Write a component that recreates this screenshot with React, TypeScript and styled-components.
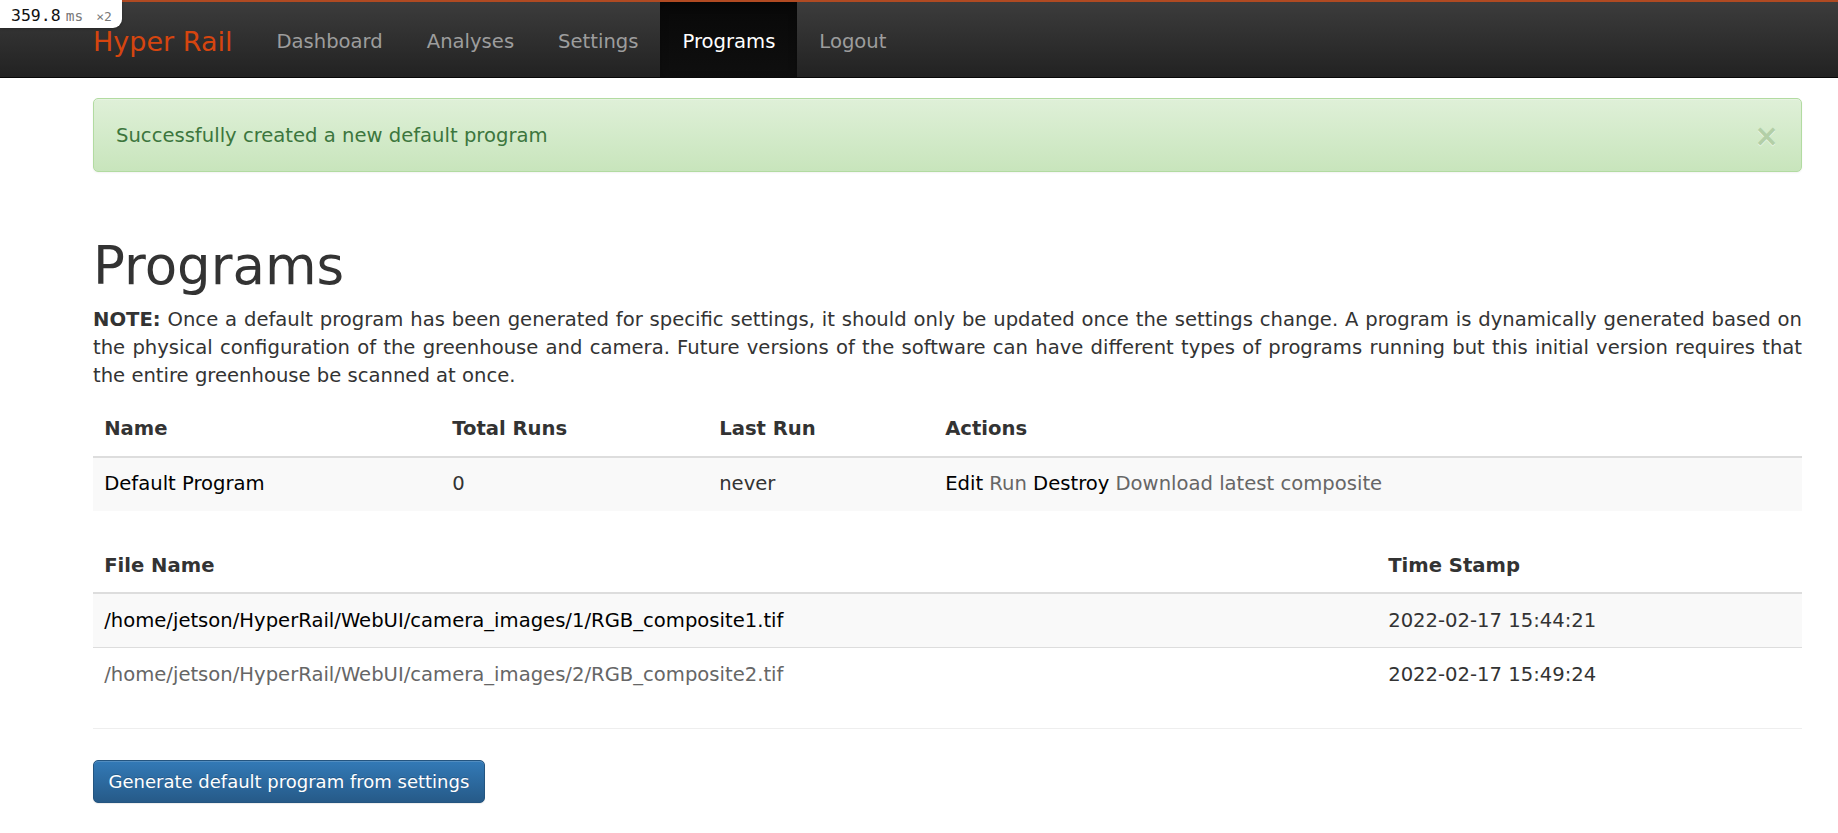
import React from "react";
import styled, { createGlobalStyle } from "styled-components";

const GlobalStyle = createGlobalStyle`
  html, body { margin: 0; padding: 0; background: #fff; }
  body {
    font-family: "DejaVu Sans", Verdana, sans-serif;
    font-size: 19.6px;
    line-height: 28px;
    color: #333;
  }
  * { box-sizing: border-box; }
`;

const Page = styled.div`
  position: relative;
  min-height: 833px;
`;

const ProfilerBadge = styled.div`
  position: absolute;
  top: 0;
  left: 0;
  z-index: 10;
  width: 122px;
  height: 28px;
  padding-left: 11px;
  background: #fff;
  border-bottom-right-radius: 9px;
  box-shadow: 0 1px 3px rgba(0, 0, 0, 0.25);
  font-family: "DejaVu Sans Mono", "Liberation Mono", monospace;
  line-height: 29px;
  white-space: nowrap;
`;

const BadgeValue = styled.span`
  font-size: 16.5px;
  color: #111;
`;

const BadgeUnit = styled.span<{ $size: number; $gap: number }>`
  font-size: ${(p) => p.$size}px;
  color: #777;
  margin-left: ${(p) => p.$gap}px;
`;

const Navbar = styled.nav`
  display: flex;
  align-items: stretch;
  height: 78px;
  padding-left: 93px;
  border-top: 2px solid #b04a22;
  border-bottom: 1px solid #080808;
  background-image: linear-gradient(to bottom, #3c3c3c 0%, #222 100%);
`;

const Brand = styled.a`
  display: flex;
  align-items: center;
  padding-top: 5px;
  margin-right: 22px;
  font-size: 27px;
  line-height: 28px;
  color: #d6450f;
  text-decoration: none;
`;

const NavItem = styled.a<{ $active?: boolean }>`
  display: flex;
  align-items: center;
  padding: 5px 22px 0;
  color: ${(p) => (p.$active ? "#fff" : "#9d9d9d")};
  text-decoration: none;
  background-image: ${(p) =>
    p.$active ? "linear-gradient(to bottom, #080808 0%, #0f0f0f 100%)" : "none"};
  box-shadow: ${(p) => (p.$active ? "inset 0 3px 9px rgba(0,0,0,.25)" : "none")};
`;

const Container = styled.main`
  margin: 0 36px 0 93px;
  padding-top: 20px;
`;

const Alert = styled.div`
  display: flex;
  align-items: flex-start;
  padding: 23px 22px 21px 22px;
  border: 1px solid #b2dba1;
  border-radius: 5px;
  color: #3c763d;
  background-image: linear-gradient(to bottom, #dff0d8 0%, #c8e5bc 100%);
  box-shadow: inset 0 1px 0 rgba(255, 255, 255, 0.25), 0 1px 2px rgba(0, 0, 0, 0.05);
  margin-bottom: 65px;
`;

const AlertText = styled.span`
  flex: 1;
`;

const CloseButton = styled.button`
  border: 0;
  padding: 0;
  background: transparent;
  font-family: "DejaVu Sans", Verdana, sans-serif;
  font-size: 29.4px;
  font-weight: bold;
  line-height: 28px;
  color: #b3cfa7;
  text-shadow: 0 1px 0 rgba(255, 255, 255, 0.6);
  cursor: pointer;
`;

const Title = styled.h1`
  margin: 0 0 11px;
  font-size: 53px;
  line-height: 58px;
  font-weight: normal;
  color: #333;
`;

const Note = styled.p`
  margin: 0 0 13px;
  text-align: justify;
`;

const Table = styled.table<{ $mb: number }>`
  width: 100%;
  border-collapse: collapse;
  margin-bottom: ${(p) => p.$mb}px;
`;

const Th = styled.th<{ $w?: number }>`
  text-align: left;
  font-weight: bold;
  padding: 12px 11.2px 12.5px;
  border-bottom: 2px solid #ddd;
  color: #333;
  width: ${(p) => (p.$w ? `${p.$w}px` : "auto")};
`;

const Tr = styled.tr<{ $striped?: boolean }>`
  background: ${(p) => (p.$striped ? "#f9f9f9" : "transparent")};
`;

const Td = styled.td`
  padding: 12.5px 11.2px;
  border-top: 1px solid #ddd;
  vertical-align: top;
`;

const Link = styled.a<{ $muted?: boolean }>`
  color: ${(p) => (p.$muted ? "#666" : "#000")};
  text-decoration: none;
`;

const Actions = styled.span`
  display: inline-flex;
  gap: 6.2px;
`;

const Rule = styled.hr`
  margin: 27px 0 31px;
  border: 0;
  border-top: 1px solid #eee;
`;

const PrimaryButton = styled.button`
  display: inline-block;
  padding: 7.5px 14.5px;
  font-family: "DejaVu Sans", Verdana, sans-serif;
  font-size: 18px;
  line-height: 26px;
  color: #fff;
  border: 1px solid #245580;
  border-radius: 5px;
  background-image: linear-gradient(to bottom, #337ab7 0%, #265a88 100%);
  text-shadow: 0 -1px 0 rgba(0, 0, 0, 0.2);
  box-shadow: inset 0 1px 0 rgba(255, 255, 255, 0.15), 0 1px 1px rgba(0, 0, 0, 0.075);
  cursor: pointer;
`;

const navLinks = ["Dashboard", "Analyses", "Settings", "Programs", "Logout"];

const files = [
  {
    path: "/home/jetson/HyperRail/WebUI/camera_images/1/RGB_composite1.tif",
    time: "2022-02-17 15:44:21",
  },
  {
    path: "/home/jetson/HyperRail/WebUI/camera_images/2/RGB_composite2.tif",
    time: "2022-02-17 15:49:24",
  },
];

export default function App() {
  return (
    <Page>
      <GlobalStyle />
      <ProfilerBadge>
        <BadgeValue>359.8</BadgeValue>
        <BadgeUnit $size={14.5} $gap={5}>ms</BadgeUnit>
        <BadgeUnit $size={13} $gap={13}>×2</BadgeUnit>
      </ProfilerBadge>
      <Navbar>
        <Brand href="#">Hyper Rail</Brand>
        {navLinks.map((l) => (
          <NavItem key={l} href="#" $active={l === "Programs"}>
            {l}
          </NavItem>
        ))}
      </Navbar>
      <Container>
        <Alert>
          <AlertText>Successfully created a new default program</AlertText>
          <CloseButton aria-label="Close">×</CloseButton>
        </Alert>
        <Title>Programs</Title>
        <Note>
          <strong>NOTE:</strong> Once a default program has been generated for specific settings, it
          should only be updated once the settings change. A program is dynamically generated based
          on the physical configuration of the greenhouse and camera. Future versions of the software
          can have different types of programs running but this initial version requires that the
          entire greenhouse be scanned at once.
        </Note>
        <Table $mb={29}>
          <thead>
            <tr>
              <Th $w={348}>Name</Th>
              <Th $w={267}>Total Runs</Th>
              <Th $w={226}>Last Run</Th>
              <Th>Actions</Th>
            </tr>
          </thead>
          <tbody>
            <Tr $striped>
              <Td>
                <Link href="#">Default Program</Link>
              </Td>
              <Td>0</Td>
              <Td>never</Td>
              <Td>
                <Actions>
                  <Link href="#">Edit</Link>
                  <Link href="#" $muted>Run</Link>
                  <Link href="#">Destroy</Link>
                  <Link href="#" $muted>Download latest composite</Link>
                </Actions>
              </Td>
            </Tr>
          </tbody>
        </Table>
        <Table $mb={0}>
          <thead>
            <tr>
              <Th $w={1284}>File Name</Th>
              <Th>Time Stamp</Th>
            </tr>
          </thead>
          <tbody>
            {files.map((f, i) => (
              <Tr key={f.path} $striped={i % 2 === 0}>
                <Td>
                  <Link href="#" $muted={i === 1}>{f.path}</Link>
                </Td>
                <Td>{f.time}</Td>
              </Tr>
            ))}
          </tbody>
        </Table>
        <Rule />
        <PrimaryButton>Generate default program from settings</PrimaryButton>
      </Container>
    </Page>
  );
}
